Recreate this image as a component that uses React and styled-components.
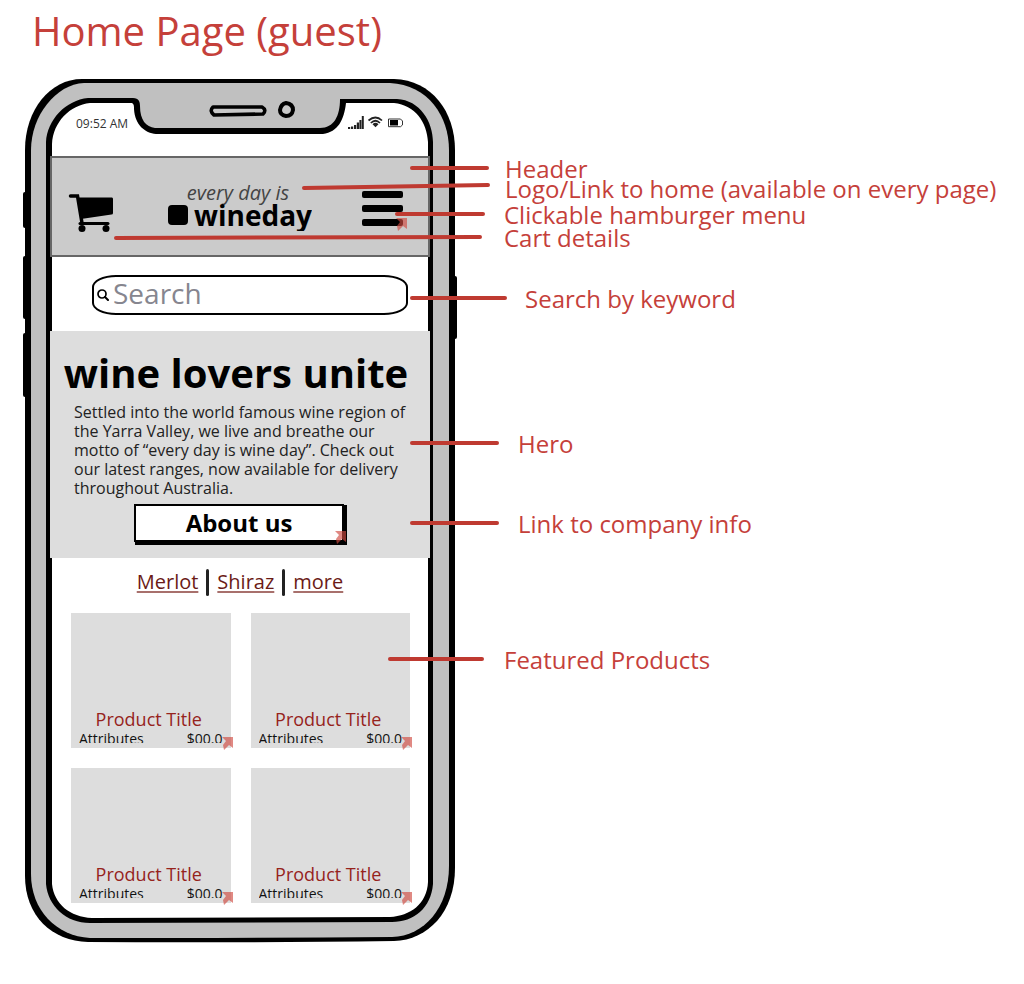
import React from "react";
import styled, { createGlobalStyle } from "styled-components";

const GlobalStyle = createGlobalStyle`
  *, *::before, *::after { box-sizing: border-box; }
  body {
    margin: 0;
    background: #ffffff;
    color: #000000;
    font-family: "Open Sans", "Noto Sans", sans-serif;
  }
  h1, h2, h3, p, ul { margin: 0; padding: 0; }
  ul { list-style: none; }
`;

const red = "#c5403a";

const Page = styled.main`
  min-height: 100vh;
  padding: 0 20px 36px;
`;

const PageTitle = styled.h1`
  padding: 3px 12px 17px;
  color: ${red};
  font-size: 40px;
  font-weight: 400;
  line-height: 56px;
`;

const Board = styled.section`
  position: relative;
  max-width: 100%;
`;

const Phone = styled.article`
  position: relative;
  width: 440px;
  padding: 0 30px 42px;
`;

const Frame = styled.svg`
  position: absolute;
  inset: 0;
  width: 100%;
  height: 100%;
`;

const Screen = styled.div`
  position: relative;
  display: flex;
  flex-direction: column;
`;

const StatusBar = styled.div`
  display: flex;
  align-items: flex-end;
  justify-content: space-between;
  height: 80px;
  padding: 0 26px 24px;
  color: #333333;
  font-size: 12px;
  line-height: 16px;
`;

const StatusIcons = styled.svg`
  width: 56px;
  height: 16px;
`;

const Header = styled.header`
  display: flex;
  align-items: center;
  justify-content: space-between;
  height: 101px;
  padding: 4px 25px 0 16px;
  border: 2px solid #666666;
  background: #cbcbcb;
`;

const IconButton = styled.button`
  position: relative;
  display: flex;
  padding: 0;
  border: 0;
  background: none;
  cursor: pointer;
`;

const Logo = styled.a`
  display: flex;
  flex-direction: column;
  align-items: center;
  padding: 0 0 4px 4px;
  color: #000000;
  text-decoration: none;
`;

const Tagline = styled.span`
  padding-right: 4px;
  color: #444444;
  font-size: 20px;
  font-style: italic;
  line-height: 20px;
`;

const Brand = styled.span`
  display: flex;
  align-items: center;
  gap: 6px;
  height: 28px;
  padding-bottom: 4px;
  overflow: hidden;
  font-size: 28px;
  font-weight: 700;
  line-height: 24px;
`;

const BrandMark = styled.span`
  width: 20px;
  height: 20px;
  border-radius: 4px;
  background: #000000;
`;

const SearchForm = styled.form`
  padding: 18px 22px 16px 42px;
`;

const SearchBox = styled.label`
  display: flex;
  align-items: center;
  gap: 4px;
  height: 40px;
  padding: 0 3px;
  border: 2px solid #000000;
  border-radius: 24px / 12px;
  background: #ffffff;
`;

const SearchInput = styled.input`
  flex: 1;
  min-width: 0;
  padding: 0 0 4px;
  border: 0;
  outline: 0;
  background: none;
  font: 400 28px/32px "Open Sans", "Noto Sans", sans-serif;
  &::placeholder { color: #86868f; opacity: 1; }
`;

const Hero = styled.section`
  display: flex;
  flex-direction: column;
  align-items: center;
  padding: 14px 17px 16px 15px;
  background: #dddddd;
`;

const HeroTitle = styled.h2`
  padding-right: 6px;
  font-size: 40px;
  font-weight: 700;
  line-height: 56px;
  white-space: nowrap;
`;

const HeroText = styled.p`
  width: 100%;
  margin: 2px 0 6px;
  padding: 0 4px 0 9px;
  color: #222222;
  font-size: 16px;
  line-height: 19px;
`;

const AboutButton = styled.button`
  position: relative;
  width: 210px;
  height: 38px;
  padding: 0;
  border: 2px solid #000000;
  background: #ffffff;
  box-shadow: 2px 2px 0 1px #000000;
  color: #000000;
  font: 700 24px/32px "Open Sans", "Noto Sans", sans-serif;
  cursor: pointer;
`;

const Varieties = styled.nav`
  display: flex;
  justify-content: center;
  gap: 8px;
  height: 55px;
  padding-top: 11px;
`;

const VarietyLink = styled.a`
  color: #6b1a16;
  font-size: 20px;
  line-height: 26px;
  text-decoration: underline;
  text-decoration-color: #a8706c;
  text-decoration-thickness: 2px;
  text-underline-offset: 2px;
`;

const Divider = styled.span`
  width: 3px;
  height: 27px;
  border-radius: 2px;
  background: #222222;
`;

const Products = styled.ul`
  display: grid;
  grid-template-columns: 1fr 1fr;
  gap: 20px;
  padding: 0 20px 1px 21px;
`;

const Product = styled.li`
  position: relative;
  display: flex;
  flex-direction: column;
  justify-content: flex-end;
  height: 135px;
  padding: 0 8px 5px;
  background: #dddddd;
`;

const ProductTitle = styled.a`
  padding-right: 4px;
  color: #96231c;
  font-size: 18px;
  line-height: 24px;
  text-align: center;
  text-decoration: none;
`;

const ProductMeta = styled.div`
  display: flex;
  justify-content: space-between;
  height: 12px;
  overflow: hidden;
  color: #111111;
  font-size: 14px;
  line-height: 16px;
`;

const Corner = styled.svg`
  position: absolute;
  right: -${(p) => p.$out}px;
  bottom: -${(p) => p.$out}px;
  width: 11px;
  height: 13px;
`;

const Leaders = styled.svg`
  position: absolute;
  top: 0;
  left: 0;
  width: 500px;
  height: 870px;
  pointer-events: none;
`;

const Note = styled.p`
  position: absolute;
  top: ${(p) => p.$y}px;
  left: ${(p) => p.$x}px;
  color: ${red};
  font-size: 24px;
  line-height: 32px;
  white-space: nowrap;
`;

const notes = [
  { text: "Header", x: 485, y: 77, line: [392, 92, 467, 92] },
  { text: "Logo/Link to home (available on every page)", x: 485, y: 97, line: [284, 112, 468, 109] },
  { text: "Clickable hamburger menu", x: 484, y: 123, line: [377, 138, 463, 138] },
  { text: "Cart details", x: 484, y: 146, line: [96, 162, 460, 161] },
  { text: "Search by keyword", x: 505, y: 207, line: [392, 222, 485, 222] },
  { text: "Hero", x: 498, y: 352, line: [392, 367, 477, 367] },
  { text: "Link to company info", x: 498, y: 432, line: [392, 447, 477, 447] },
  { text: "Featured Products", x: 484, y: 568, line: [370, 583, 462, 583] },
];

const LinkCorner = ({ out = 2 }) => (
  <Corner $out={out} viewBox="0 0 11 13" aria-hidden="true">
    <path d="M0 0H11V11L7 8L2 13L1 8L4 4Z" fill="#cf4a40" fillOpacity="0.65" />
  </Corner>
);

const PhoneFrame = () => (
  <Frame viewBox="20 76 440 870" preserveAspectRatio="none" aria-hidden="true">
    <g fill="#000">
      <rect x="23" y="192" width="6" height="36" rx="2" />
      <rect x="23" y="256" width="6" height="63" rx="2" />
      <rect x="23" y="333" width="6" height="64" rx="2" />
      <rect x="451" y="276" width="6" height="63" rx="2" />
      <path d="M82 79H394C432 80 455 112 455 150V868C455 912 428 940 394 941Q230 943 88 942C52 941 25 916 25 876V150C25 110 50 79 82 79Z" />
    </g>
    <path d="M84 83H390C428 85 449 116 449 150V866C449 908 424 936 392 937Q230 938 90 938C56 936 31 910 31 874V150C31 116 56 84 84 83Z" fill="#c0c0c0" />
    <path d="M88 98H133C139 98 140 102 140 106C140 120 146 127 155 128H320C334 128 340 116 340 99H397C420 100 433 122 433 142V884C431 908 414 922 392 922L90 923C66 923 48 906 46 884V142C47 120 66 100 88 98Z" fill="#000" />
    <path d="M90 103H132C134 104 134 106 134 109C135 125 145 133 156 134H323C338 132 344 120 346 103H394C415 105 427 122 428 142V882C427 904 410 916 390 917L92 918C70 917 54 904 52 884V144C53 122 70 105 90 103Z" fill="#fff" />
    <path d="M213 107H262Q267 110 263 114L214 115Q209 111 213 107Z" fill="#c8c8c8" stroke="#000" strokeWidth="3.6" strokeLinejoin="round" />
    <path d="M286 103Q293 104 293 110Q292 116 286 116Q280 115 280 110Q281 104 286 103Z" fill="#c8c8c8" stroke="#000" strokeWidth="4" />
  </Frame>
);

const products = [1, 2, 3, 4];

export default function App() {
  return (
    <Page>
      <GlobalStyle />
      <PageTitle>Home Page (guest)</PageTitle>
      <Board>
        <Phone>
          <PhoneFrame />
          <Screen>
            <StatusBar>
              <span>09:52 AM</span>
              <StatusIcons viewBox="348 116 56 16" role="img" aria-label="Signal, Wi-Fi and battery">
                <path d="M348 127h2.200v2h-2.200zM351 126.500h2.200v2.500h-2.200zM354 125h2.200v4h-2.200zM356.800 122.500h2.200v6.500h-2.200zM359.400 120h2v9h-2zM361.800 116h2v13h-2z" fill="#222" />
                <g fill="none" stroke="#222" strokeWidth="1.700">
                  <path d="M368.500 120.500Q375.500 114.500 382 120.500M370.800 123Q375.500 118.500 380 123" />
                </g>
                <path d="M372.500 124.200Q375.500 121.500 378.500 124.200L375.500 127.300Z" fill="#222" />
                <path d="M388.500 119H400.500L402.500 121V125L400.500 126.700H388.500Z" fill="#fff" stroke="#333" />
                <rect x="390" y="120" width="8" height="5.500" fill="#000" />
              </StatusIcons>
            </StatusBar>
            <Header>
              <IconButton type="button" aria-label="Cart">
                <svg width="46" height="48" viewBox="68 185 46 48" aria-hidden="true">
                  <path d="M70.500 196H77.500L82 223" fill="none" stroke="#000" strokeWidth="3.500" strokeLinecap="round" />
                  <path d="M78 197.500H112Q113 197.500 113 199V213Q113 214.500 111.500 214.500L81 219Z" />
                  <path d="M80 223.500H108" stroke="#000" strokeWidth="3" strokeLinecap="round" />
                  <circle cx="82" cy="228.500" r="3.500" />
                  <circle cx="106" cy="228.500" r="3.500" />
                </svg>
              </IconButton>
              <Logo href="#home">
                <Tagline>every day is</Tagline>
                <Brand><BrandMark />wineday</Brand>
              </Logo>
              <IconButton type="button" aria-label="Menu">
                <svg width="41" height="36" viewBox="0 0 41 36" aria-hidden="true">
                  <rect width="41" height="7" rx="2" />
                  <rect y="14" width="41" height="7" rx="2" />
                  <rect y="28" width="41" height="7" rx="2" />
                </svg>
                <LinkCorner out={4} />
              </IconButton>
            </Header>
            <SearchForm role="search" onSubmit={(e) => e.preventDefault()}>
              <SearchBox>
                <svg width="12" height="12" viewBox="0 0 12 12" aria-hidden="true">
                  <circle cx="5" cy="5" r="4" fill="none" stroke="#000" strokeWidth="1.700" />
                  <path d="M8 8L11 11" stroke="#000" strokeWidth="2" strokeLinecap="round" />
                </svg>
                <SearchInput type="search" placeholder="Search" aria-label="Search" />
              </SearchBox>
            </SearchForm>
            <Hero>
              <HeroTitle>wine lovers unite</HeroTitle>
              <HeroText>
                Settled into the world famous wine region of the Yarra Valley, we live and breathe our
                motto of “every day is wine day”. Check out our latest ranges, now available for
                delivery throughout Australia.
              </HeroText>
              <AboutButton type="button">
                About us
                <LinkCorner out={4} />
              </AboutButton>
            </Hero>
            <Varieties aria-label="Varieties">
              <VarietyLink href="#merlot">Merlot</VarietyLink>
              <Divider />
              <VarietyLink href="#shiraz">Shiraz</VarietyLink>
              <Divider />
              <VarietyLink href="#more">more</VarietyLink>
            </Varieties>
            <Products>
              {products.map((id) => (
                <Product key={id}>
                  <ProductTitle href="#product">Product Title</ProductTitle>
                  <ProductMeta>
                    <span>Attributes</span>
                    <span>$00.0</span>
                  </ProductMeta>
                  <LinkCorner />
                </Product>
              ))}
            </Products>
          </Screen>
        </Phone>
        <Leaders viewBox="0 0 500 870" aria-hidden="true">
          {notes.map(({ text, line: [x1, y1, x2, y2] }) => (
            <line key={text} x1={x1} y1={y1} x2={x2} y2={y2} stroke="#bf3a31" strokeWidth="4" strokeLinecap="round" />
          ))}
        </Leaders>
        {notes.map(({ text, x, y }) => (
          <Note key={text} $x={x} $y={y}>{text}</Note>
        ))}
      </Board>
    </Page>
  );
}
